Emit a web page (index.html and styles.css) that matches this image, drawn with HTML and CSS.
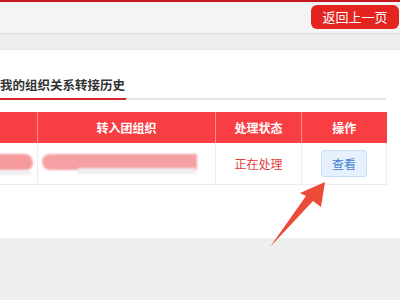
FILE: index.html
```html
<!DOCTYPE html>
<html lang="zh-CN">
<head>
  <meta charset="UTF-8"/>
  <meta name="viewport" content="width=device-width,initial-scale=1.0"/>
  <title>组织关系转接历史</title>
  <link rel="stylesheet" href="styles.css">
</head>
<body>

<div class="topbar"></div>
<header>
  <a class="back" href="#">返回上一页</a>
</header>
<div class="band"></div>

<main class="panel">
  <div class="inner">
    <div class="tabs">
      <div class="tab active">我的组织关系转接历史</div>
    </div>

    <table class="history">
      <thead>
        <tr>
          <th class="c1"></th>
          <th class="c2">转入团组织</th>
          <th class="c3">处理状态</th>
          <th class="c4">操作</th>
        </tr>
      </thead>
      <tbody>
        <tr>
          <td class="c1"><span class="blur b1"></span><span class="blur b4"></span></td>
          <td class="c2"><span class="blur b2"></span><span class="blur b3"></span></td>
          <td class="c3 status">正在处理</td>
          <td class="c4"><button class="view">查看</button></td>
        </tr>
      </tbody>
    </table>
  </div>
</main>

<!-- annotation arrow -->
<svg class="arrow" width="400" height="300" viewBox="0 0 400 300">
  <polygon points="325,182 321,207 313,201 270,247 306,196 300,193" fill="#ec4b39"/>
</svg>

</body>
</html>
```

FILE: styles.css
```css
/* ========== Base ========== */
* { margin:0; padding:0; box-sizing:border-box }
html, body { width:400px; height:300px; overflow:hidden }
body { font-family:"Noto Sans CJK SC","Liberation Sans",sans-serif; background:#efefef; color:#333; position:relative }

/* ========== Header ========== */
.topbar { height:2px; background:#c8161e }
header {
  height:32px;
  background:#f4f4f4;
  border-bottom:1px solid #dcdcdc;
  display:flex;
  justify-content:flex-end;
  align-items:flex-start;
  padding-top:3px;
}
.back {
  width:88px; height:24px;
  margin-right:1px;
  background:#e3241f;
  color:#fff;
  border-radius:6px;
  font-size:13px;
  line-height:24px;
  text-align:center;
  text-decoration:none;
}
.band { height:16px; background:#eeeeee; border-bottom:1px solid #e6e6e6 }

/* ========== Panel ========== */
.panel { background:#fff; height:188px; overflow:hidden }
.inner { width:426px; margin-left:-40px }

.tabs { height:50px; display:flex; align-items:flex-end; border-bottom:2px solid #e4e4e4 }
.tab {
  font-size:12.5px;
  font-weight:bold;
  color:#333;
  padding:0 1px 6px 40px;
  margin-bottom:-2px;
  line-height:14px;
}
.tab.active { border-bottom:2px solid #d8232a }

/* ========== Table ========== */
.history { width:100%; margin-top:12px; border-collapse:collapse; table-layout:fixed }
.history th {
  height:31px;
  background:#f83d43;
  color:#fff;
  font-size:12px;
  font-weight:bold;
  border-left:1px solid #fb8a8e;
}
.history th:first-child { border-left:none }
.history td {
  height:41px;
  text-align:center;
  font-size:12px;
  border:1px solid #ececec;
  border-top:none;
  position:relative;
}
.c1 { width:77px }
.c2 { width:178px }
.c3 { width:86px }
.c4 { width:85px }

.status { color:#e23c3c }

.view {
  width:46px; height:27px;
  background:#e7f1fd;
  border:1px solid #c8ddf5;
  border-radius:3px;
  color:#3f82d6;
  font-family:inherit;
  font-size:12px;
}

/* blurred private data */
.blur { position:absolute; display:block; filter:blur(1.2px) }
.b1 { left:0; top:11px; width:72px; height:17px; background:#f59a9c; border-radius:0 9px 9px 0 }
.b4 { left:20px; top:27px; width:50px; height:5px; background:#efefef }
.b2 { left:4px; top:11px; width:155px; height:16px; background:#f5a0a2; border-radius:8px 0 0 8px }
.b3 { left:40px; top:25px; width:118px; height:6px; background:#ededed }

/* ========== Annotation ========== */
.arrow { position:absolute; left:0; top:0; pointer-events:none }
```
